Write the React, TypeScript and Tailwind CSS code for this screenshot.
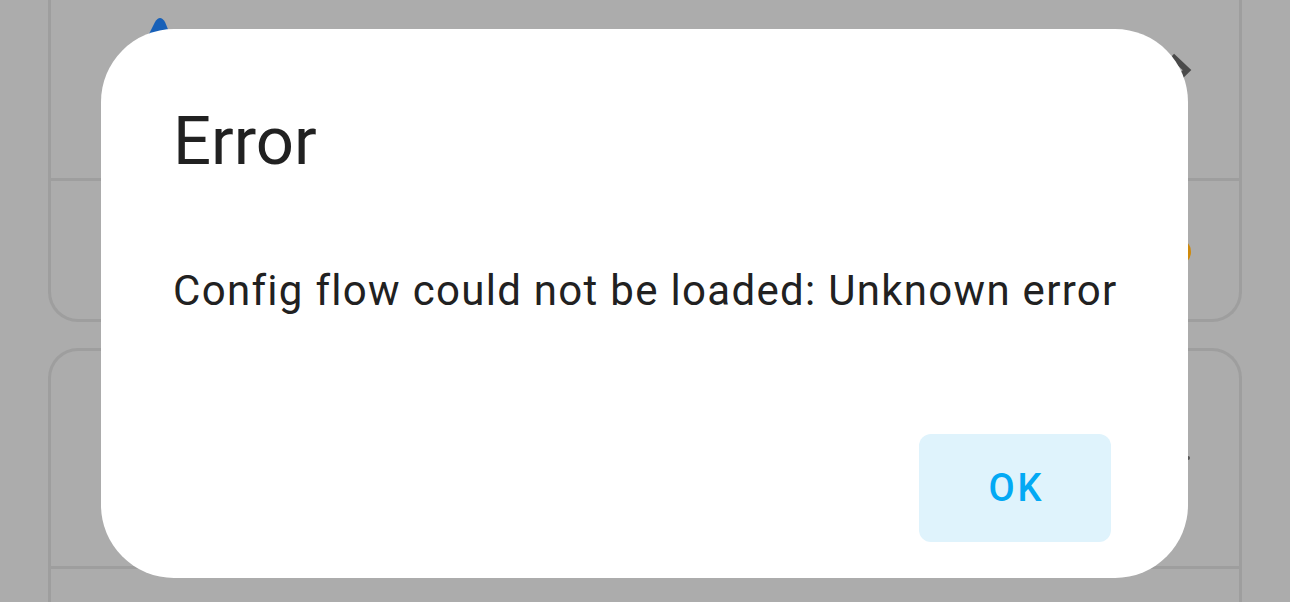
import React from 'react';

function BackgroundCards() {
  return (
    <div className="flex flex-col px-[48px]">
      <div className="relative h-[322px] rounded-b-[30px] border-x-[3px] border-b-[3px] border-[#9e9e9e]">
        <div className="mt-[178px] h-[3px] bg-[#9e9e9e]" />
      </div>
      <div className="mt-[26px] h-[300px] rounded-t-[30px] border-x-[3px] border-t-[3px] border-[#9e9e9e]">
        <div className="mt-[215px] h-[3px] bg-[#9e9e9e]" />
      </div>
    </div>
  );
}

export default function App() {
  return (
    <div
      className="relative h-[602px] w-[1290px] overflow-hidden bg-[#acacac]"
      style={{ fontFamily: 'Roboto, "Noto Sans", sans-serif' }}
    >
      <BackgroundCards />

      {/* bits of page content peeking out from behind the dialog */}
      <svg className="absolute left-[138px] top-[14px]" width="40" height="40" viewBox="0 0 40 40">
        <path d="M4 34 L17 8 Q22 0 27 8 L36 30 Z" fill="#1760b8" />
      </svg>
      <svg className="absolute left-[1165px] top-[48px]" width="34" height="40" viewBox="0 0 34 40">
        <path d="M7 8 L22 22 L10 34" fill="none" stroke="#4a4a4a" strokeWidth="6" />
      </svg>
      <div className="absolute left-[1163px] top-[238px] h-[28px] w-[28px] rounded-full bg-[#cf8a0c]" />
      <div className="absolute left-[1186px] top-[456px] h-[4px] w-[4px] rounded-full bg-[#555]" />

      <div className="absolute inset-0 flex items-start pl-[101px] pt-[29px]">
        <div className="flex h-[549px] w-[1087px] flex-col rounded-[73px] bg-white pl-[72px] pr-[77px] pt-[73px]">
          <h2 className="text-[67px] leading-[78px] font-normal text-[#212121]">Error</h2>
          <p className="mt-[82px] text-[42px] leading-[57px] tracking-[1.3px] whitespace-nowrap text-[#212121]">
            Config flow could not be loaded: Unknown error
          </p>
          <div className="mt-auto mb-[36px] flex justify-end">
            <button className="h-[108px] w-[192px] rounded-[12px] bg-[#dff3fc] pl-[3px] text-[38px] font-medium tracking-[3px] text-[#03a9f4]">
              OK
            </button>
          </div>
        </div>
      </div>
    </div>
  );
}
